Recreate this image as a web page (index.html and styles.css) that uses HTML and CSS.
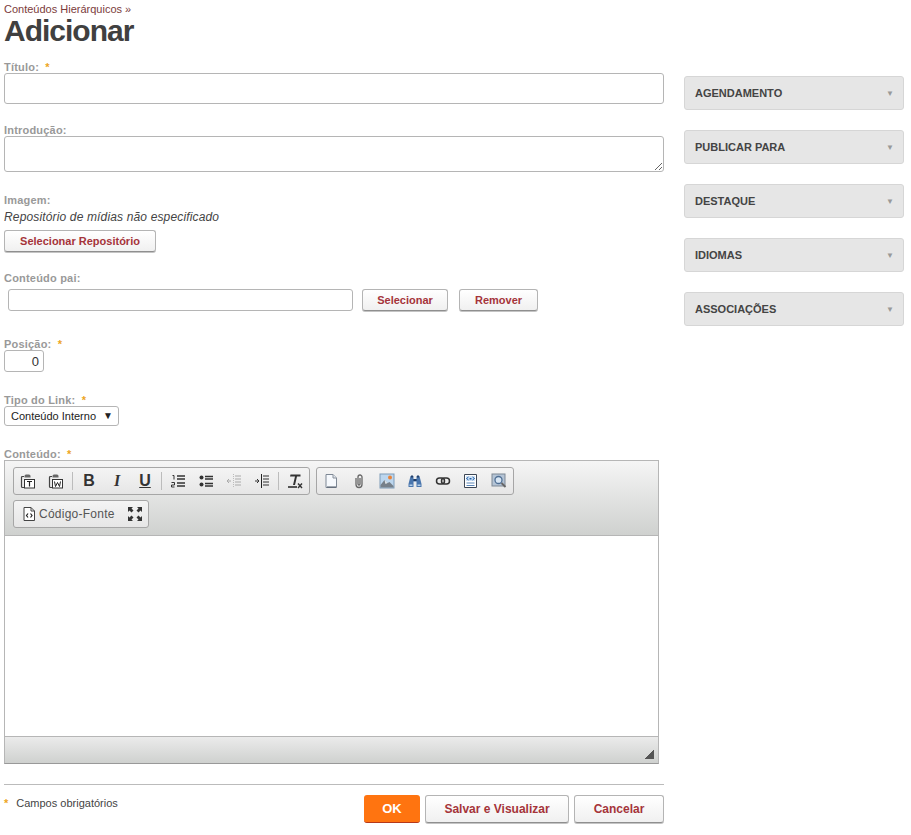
FILE: index.html
```html
<!DOCTYPE html>
<html lang="pt-BR">
<head>
	<meta charset="UTF-8">
	<title>Adicionar</title>
	<link rel="stylesheet" href="styles.css">
</head>
<body>
	<div class="page">
		<div class="main">
			<div class="crumb">Conteúdos Hierárquicos »</div>
			<h1>Adicionar</h1>

			<div class="field short">
				<label>Título: <i class="req">*</i></label>
				<input class="txt big" type="text">
			</div>
			<div class="field">
				<label>Introdução:</label>
				<textarea class="area"></textarea>
			</div>
			<div class="field short">
				<label>Imagem:</label>
				<p class="note">Repositório de mídias não especificado</p>
				<button class="btn wide">Selecionar Repositório</button>
			</div>
			<div class="field tall">
				<label>Conteúdo pai:</label>
				<div class="parent">
					<input class="txt" type="text">
					<button class="btn sel">Selecionar</button>
					<button class="btn rem">Remover</button>
				</div>
			</div>
			<div class="field">
				<label>Posição: <i class="req">*</i></label>
				<input class="txt pos" type="text" value="0">
			</div>
			<div class="field">
				<label>Tipo do Link: <i class="req">*</i></label>
				<div class="combo">
					<select><option>Conteúdo Interno</option></select>
					<span class="combo-arrow">▼</span>
				</div>
			</div>
			<div class="field last">
				<label>Conteúdo: <i class="req">*</i></label>
				<div class="editor">
					<div class="toolbar">
						<div class="group">
							<span class="tb"><svg width="16" height="16" viewBox="0 0 16 16"><path d="M4 3.500H2.500q-1 0-1 1v9q0 1 1 1H4" fill="none" stroke="#444" stroke-width="1.200"/><path d="M4.500 3q0-1.500 1.500-1.500h3Q10.500 1.500 10.500 3v1.500h-6z" fill="#666"/><rect x="4.500" y="6.500" width="10" height="8.500" fill="#fff" stroke="#333"/><path d="M7 8.500h5M9.500 8.500v5" stroke="#222" stroke-width="1.200"/></svg></span>
							<span class="tb"><svg width="16" height="16" viewBox="0 0 16 16"><path d="M4 3.500H2.500q-1 0-1 1v9q0 1 1 1H4" fill="none" stroke="#444" stroke-width="1.200"/><path d="M4.500 3q0-1.500 1.500-1.500h3Q10.500 1.500 10.500 3v1.500h-6z" fill="#666"/><rect x="4.500" y="6.500" width="10" height="8.500" fill="#fff" stroke="#333"/><path d="M6.500 8.500l1 5 2-4 2 4 1-5" fill="none" stroke="#222"/></svg></span>
							<span class="sep"></span>
							<span class="tb letter b">B</span>
							<span class="tb letter it">I</span>
							<span class="tb letter un">U</span>
							<span class="sep"></span>
							<span class="tb"><svg width="16" height="16" viewBox="0 0 16 16"><path d="M2.500 2.500h1.500v4M1.500 9.500h3v2.500h-3v2h3" fill="none" stroke="#333"/><path d="M7 3h8M7 6h8M7 10h8M7 13h8" stroke="#333" stroke-width="1.300"/></svg></span>
							<span class="tb"><svg width="16" height="16" viewBox="0 0 16 16"><circle cx="3.500" cy="4.500" r="2" fill="#333"/><circle cx="3.500" cy="11.500" r="2" fill="#333"/><path d="M7 3.500h8M7 6h8M7 10.500h8M7 13h8" stroke="#333" stroke-width="1.300"/></svg></span>
							<span class="tb"><svg width="16" height="16" viewBox="0 0 16 16"><path d="M1 8h4M3 6L1 8l2 2" fill="none" stroke="#aaa"/><path d="M7.500 1v14" stroke="#bbb" stroke-dasharray="1 1"/><path d="M9 3h6M9 6h6M9 9h6M9 12h6" stroke="#aaa"/></svg></span>
							<span class="tb"><svg width="16" height="16" viewBox="0 0 16 16"><path d="M1 8h4M3 6l2 2-2 2" fill="none" stroke="#333"/><path d="M7.500 1v14" stroke="#222"/><path d="M9 3h6M9 6h6M9 9h6M9 12h6" stroke="#333"/></svg></span>
							<span class="sep"></span>
							<span class="tb"><svg width="16" height="16" viewBox="0 0 16 16"><path d="M3.500 1.500h10v2H10L8 12H6L8 3.500H3z" fill="#333"/><path d="M1 14h9" stroke="#222" stroke-width="1.500"/><path d="M11 10.500l4 4.500M15 10.500l-4 4.500" stroke="#333" stroke-width="1.400"/></svg></span>
						</div>
						<div class="group">
							<span class="tb"><svg width="16" height="16" viewBox="0 0 16 16"><path d="M3 1.500h7l3.500 3.500v9.500H3z" fill="#f6f9fd" stroke="#7d8794"/><path d="M10 1.500V5h3.500" fill="#dfe6ee" stroke="#8a9099"/><path d="M4 14h9" stroke="#4e5866"/></svg></span>
							<span class="tb"><svg width="16" height="16" viewBox="0 0 16 16"><path d="M5 5v6.500a3 3 0 0 0 6 0V4a2 2 0 0 0-4 0v7a1 1 0 0 0 2 0V5" fill="none" stroke="#666" stroke-width="1.300"/></svg></span>
							<span class="tb"><svg width="16" height="16" viewBox="0 0 16 16"><rect x="1" y="1" width="14" height="14" fill="#bcd6ee" stroke="#7e9cb8"/><circle cx="11" cy="4.500" r="2" fill="#e8833a"/><path d="M1.500 14.500V12l4-5 3 3 2-1 4 4v1.500z" fill="#76808a"/><path d="M5.500 7l3 3-2 1z" fill="#e6eaee"/></svg></span>
							<span class="tb"><svg width="16" height="16" viewBox="0 0 16 16"><path d="M3.500 3h3v3h3V3h3l2 8v3H9.500V8.500h-3V14H1.500v-3z" fill="#4a76ad"/><path d="M4 2.500h2v2H4zM10 2.500h2v2h-2z" fill="#24406a"/><path d="M2.500 11.500h3v1.500h-3zM10.500 11.500h3v1.500h-3z" fill="#b6d0ea"/><rect x="6.500" y="6" width="3" height="2" fill="#1f3c66"/></svg></span>
							<span class="tb"><svg width="16" height="16" viewBox="0 0 16 16"><rect x="1.500" y="5" width="8" height="6" rx="3" fill="none" stroke="#333" stroke-width="1.500"/><rect x="6.500" y="5" width="8" height="6" rx="3" fill="none" stroke="#333" stroke-width="1.500"/></svg></span>
							<span class="tb"><svg width="16" height="16" viewBox="0 0 16 16"><path d="M1.500 1.500h12v13h-12z" fill="#fff" stroke="#3d4654"/><path d="M3 3h9v5H3z" fill="#cfe2f6"/><path d="M5.500 4L3.500 5.500 5.500 7M9.500 4l2 1.500-2 1.500" fill="none" stroke="#1f5fa8"/><rect x="6.500" y="5" width="2" height="1.500" fill="#1f5fa8"/><path d="M3.500 10h8M3.500 12.500h8" stroke="#5a86b8"/></svg></span>
							<span class="tb"><svg width="16" height="16" viewBox="0 0 16 16"><rect x="1" y="1" width="13" height="12" fill="#b4c4d6" stroke="#7d8794"/><circle cx="7.500" cy="7" r="3.500" fill="#d8e6f4" stroke="#4f6f94" stroke-width="1.300"/><path d="M10.500 10l4 4" stroke="#666" stroke-width="1.800"/></svg></span>
						</div>
						<div class="group">
							<span class="tb source">
								<svg width="16" height="16" viewBox="0 0 16 16"><path d="M3 1.500h7l3.500 3.500v9.500H3z" fill="#fff" stroke="#444"/><path d="M10 1.500V5h3.500" fill="none" stroke="#444"/><path d="M7 7.500L5.500 9.500 7 11.500M9.500 7.500l1.500 2-1.500 2" fill="none" stroke="#222" stroke-width="1.200"/></svg>
								<span>Código-Fonte</span>
							</span>
							<span class="tb max"><svg width="16" height="16" viewBox="0 0 16 16"><path d="M1 1h5L4.500 2.500 6.500 4.500 4.500 6.500 2.500 4.500 1 6zM15 1v5l-1.500-1.500-2 2-2-2 2-2L10 1zM1 15v-5l1.500 1.500 2-2 2 2-2 2L6 15zM15 15h-5l1.500-1.500-2-2 2-2 2 2L15 10z" fill="#333"/></svg></span>
						</div>
					</div>
					<div class="edit-body"></div>
					<div class="edit-foot"><span class="grip"></span></div>
				</div>
			</div>

			<div class="actions">
				<div class="legend"><i class="req">*</i><span>Campos obrigatórios</span></div>
				<div class="action-btns">
					<button class="btn act ok">OK</button>
					<button class="btn act save">Salvar e Visualizar</button>
					<button class="btn act cancel">Cancelar</button>
				</div>
			</div>
		</div>

		<div class="side">
			<div class="panel"><span>AGENDAMENTO</span><span class="arrow">▼</span></div>
			<div class="panel"><span>PUBLICAR PARA</span><span class="arrow">▼</span></div>
			<div class="panel"><span>DESTAQUE</span><span class="arrow">▼</span></div>
			<div class="panel"><span>IDIOMAS</span><span class="arrow">▼</span></div>
			<div class="panel"><span>ASSOCIAÇÕES</span><span class="arrow">▼</span></div>
		</div>
	</div>
</body>
</html>
```

FILE: styles.css
```css
*{box-sizing:border-box;}
body{margin:0;background:#fff;font-family:"Liberation Sans",Arial,sans-serif;font-size:11px;color:#444;}
.page{display:flex;padding:2px 0 0 4px;}
.main{width:660px;}
.side{width:220px;margin:74px 0 0 20px;display:flex;flex-direction:column;gap:20px;}

.crumb{height:14px;line-height:14px;font-size:11px;color:#7b3b3b;}
h1{margin:0 0 15px;height:30px;line-height:30px;font-size:30px;font-weight:bold;color:#404040;letter-spacing:-1px;}

.field{margin-bottom:22px;}
.field.short{margin-bottom:20px;}
.field.tall{margin-bottom:27px;}
.field.last{margin-bottom:20px;}
label{display:block;height:12px;line-height:12px;font-size:11px;font-weight:bold;color:#999;letter-spacing:.2px;}
.req{font-style:normal;font-weight:bold;color:#eda51e;font-size:11px;line-height:10px;margin-left:3px;}

.txt{display:block;height:22px;border:1px solid #b5b5b5;border-radius:3px;background:#fff;padding:2px 5px;font:12px "Liberation Sans",Arial,sans-serif;color:#333;outline:0;}
.txt.big{width:660px;height:31px;}
.area{display:block;width:660px;height:36px;border:1px solid #b5b5b5;border-radius:3px;padding:3px 5px;outline:0;margin:0;}
.note{margin:4px 0 5px;height:15px;line-height:15px;font-size:12px;font-style:italic;color:#444;letter-spacing:.15px;}

.btn{display:block;height:22px;padding:0;border:1px solid #b4b4b4;border-bottom-color:#8f8f8f;border-radius:3px;background:linear-gradient(#fff,#f0f0f0);font:bold 11px "Liberation Sans",Arial,sans-serif;color:#a5343a;box-shadow:0 1px 0 #c4c4c4;}
.wide{width:152px;}
.parent{display:flex;align-items:flex-start;margin:5px 0 0 4px;}
.parent .txt{width:345px;}
.sel{width:86px;margin-left:9px;}
.rem{width:79px;margin-left:11px;}
.pos{width:40px;text-align:right;font-size:13px;padding:2px 4px;}

.combo{position:relative;width:115px;height:20px;}
.combo select{display:block;width:100%;height:20px;appearance:none;border:1px solid #b5b5b5;border-radius:3px;background:#fff;padding:0 0 0 6px;font:11px "Liberation Sans",Arial,sans-serif;color:#222;outline:0;}
.combo-arrow{position:absolute;right:6px;top:4px;font-size:10px;line-height:11px;color:#222;}

.editor{width:655px;height:304px;border:1px solid #b6b6b6;border-bottom-color:#999;display:flex;flex-direction:column;}
.toolbar{height:75px;padding:6px 8px 0;display:flex;flex-wrap:wrap;align-content:flex-start;gap:5px 6px;background:linear-gradient(#f5f5f5,#cfd1cf);border-bottom:1px solid #b6b6b6;}
.group{display:flex;align-items:center;height:28px;border:1px solid #a6a6a6;border-radius:3px;background:linear-gradient(#f4f4f4,#e6e6e6);}
.tb{display:flex;align-items:center;justify-content:center;width:28px;height:26px;}
.sep{width:5px;height:18px;background:linear-gradient(#bcbcbc,#bcbcbc) center/1px 100% no-repeat;}
.letter{font-size:16px;font-weight:bold;color:#333;}
.it{font-family:"Liberation Serif",serif;font-style:italic;}
.un{text-decoration:underline;}
.source{width:107px;justify-content:flex-start;gap:2px;padding-left:7px;font-size:12px;color:#555;letter-spacing:.25px;}
.source svg{flex:none;}
.source span{white-space:nowrap;}
.max{width:27px;}
.edit-body{flex:1;background:#fff;}
.edit-foot{height:27px;background:linear-gradient(#ebebeb,#cfd1cf);border-top:1px solid #b6b6b6;display:flex;justify-content:flex-end;align-items:flex-end;padding:0 4px 4px 0;}
.grip{width:10px;height:10px;background:linear-gradient(135deg,transparent 50%,#555 50%);}

.actions{border-top:1px solid #bbb;height:44px;display:flex;justify-content:space-between;padding-top:10px;}
.legend{display:flex;gap:8px;margin-top:2px;font-size:11px;color:#444;line-height:12px;}
.legend .req{margin:0;line-height:12px;}
.action-btns{display:flex;gap:5px;}
.act{height:28px;font-size:12px;}
.ok{width:56px;background:#ff7410;border:0;border-bottom:1px solid #b5381a;color:#fff;font-size:13px;box-shadow:none;}
.save{width:144px;}
.cancel{width:90px;}

.panel{height:34px;display:flex;justify-content:space-between;align-items:center;padding:0 9px 0 10px;background:#e6e6e6;border:1px solid #d6d6d6;border-radius:3px;font-size:11px;font-weight:bold;color:#444;}
.arrow{font-size:8px;color:#999;font-weight:normal;}
```
